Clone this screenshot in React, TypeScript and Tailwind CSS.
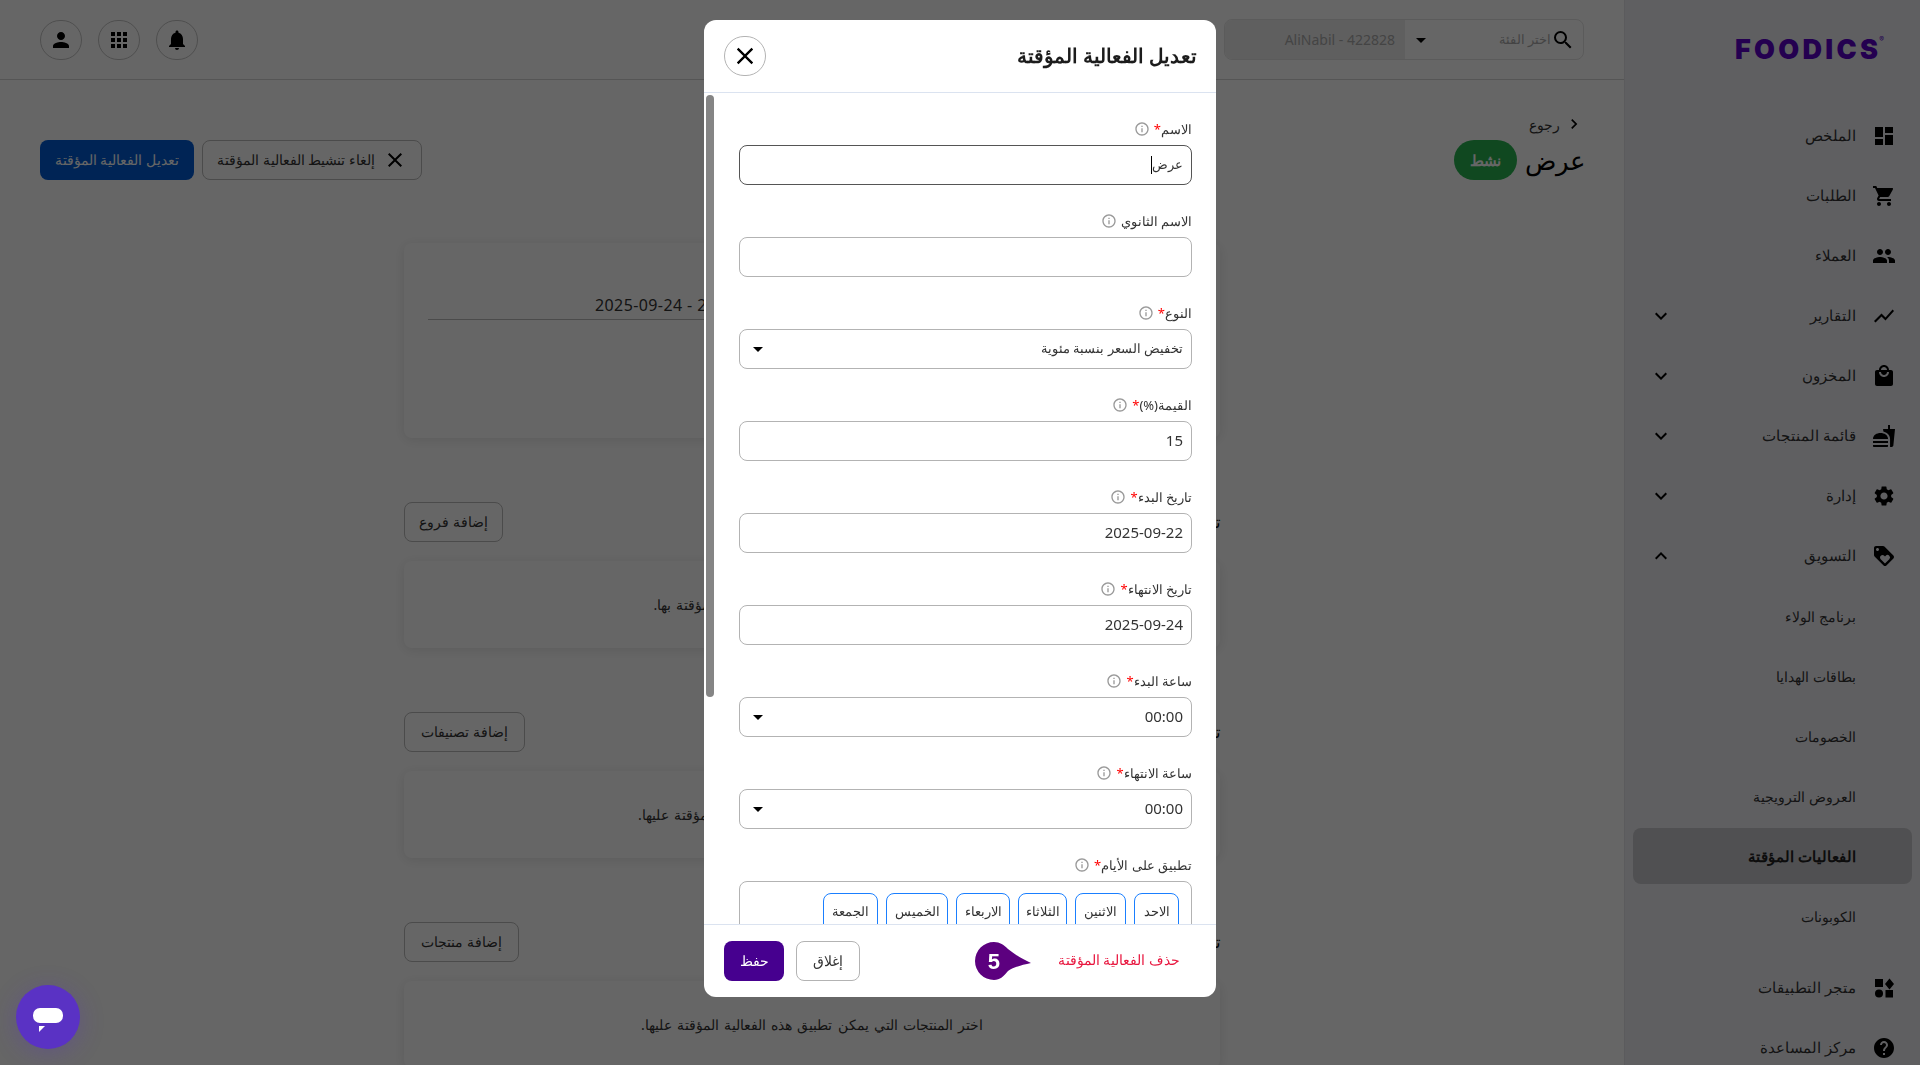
import type { ReactNode } from 'react';
import {
  MdApps,
  MdArrowDropDown,
  MdChevronRight,
  MdClose,
  MdDashboard,
  MdExpandLess,
  MdExpandMore,
  MdFastfood,
  MdHelp,
  MdInfoOutline,
  MdLocalMall,
  MdLoyalty,
  MdNotifications,
  MdPeople,
  MdPerson,
  MdSearch,
  MdSettings,
  MdShoppingCart,
  MdShowChart,
} from 'react-icons/md';

const AppsIcon = () => (
  <svg viewBox="0 0 24 24" className="size-6" fill="currentColor">
    <rect x="3" y="3" width="8" height="8" />
    <path d="M17.5 2.5 22 8l-4.5 5.5L13 8z" />
    <circle cx="7" cy="17.5" r="4" />
    <rect x="13.5" y="14" width="7.5" height="7.5" />
  </svg>
);

const topItems = [
  { label: 'الملخص', icon: <MdDashboard className="size-6" /> },
  { label: 'الطلبات', icon: <MdShoppingCart className="size-6" /> },
  { label: 'العملاء', icon: <MdPeople className="size-6" /> },
  { label: 'التقارير', icon: <MdShowChart className="size-6" />, more: true },
  { label: 'المخزون', icon: <MdLocalMall className="size-6" />, more: true },
  { label: 'قائمة المنتجات', icon: <MdFastfood className="size-6" />, more: true },
  { label: 'إدارة', icon: <MdSettings className="size-6" />, more: true },
];

const subItems = ['برنامج الولاء', 'بطاقات الهدايا', 'الخصومات', 'العروض الترويجية', 'الفعاليات المؤقتة', 'الكوبونات'];

const days = [
  { label: 'الاحد', width: 'w-[45px]' },
  { label: 'الاثنين', width: 'w-[51px]' },
  { label: 'الثلاثاء', width: 'w-[49px]' },
  { label: 'الاربعاء', width: 'w-[54px]' },
  { label: 'الخميس', width: 'w-[62px]' },
  { label: 'الجمعة', width: 'w-[55px]' },
];

const SideItem = ({ label, icon, chevron }: { label: string; icon: ReactNode; chevron?: ReactNode }) => (
  <div className="mx-2 mb-1 flex h-14 items-center gap-4 pr-4 pl-4 text-[#333]">
    <span className="flex w-6 justify-center text-black">{icon}</span>
    <span className="flex-1 text-[14.5px]">{label}</span>
    {chevron}
  </div>
);

const Sidebar = () => (
  <aside className="h-[1065px] w-[296px] shrink-0 overflow-hidden border-l border-[#e4e4e8] bg-[#eeeef3]">
    <div className="flex h-[108px] justify-start pt-[34px] pr-[36px]" dir="ltr">
      <div className="ml-auto flex h-8 items-start font-['Inter',sans-serif] text-[27px] leading-8 font-black tracking-[3.3px] text-[#5a00c8]">
        FOODICS
        <span className="mt-0.5 -ml-0.5 text-[7px] leading-none font-normal tracking-normal">®</span>
      </div>
    </div>
    {topItems.map((item) => (
      <SideItem
        key={item.label}
        label={item.label}
        icon={item.icon}
        chevron={item.more ? <MdExpandMore className="size-6 text-black" /> : undefined}
      />
    ))}
    <SideItem label="التسويق" icon={<MdLoyalty className="size-6" />} chevron={<MdExpandLess className="size-6 text-black" />} />
    <div className="pb-3">
      {subItems.map((label) => (
        <div
          key={label}
          className={
            label === 'الفعاليات المؤقتة'
              ? 'mx-2 mb-1 flex h-14 items-center rounded-lg bg-[#c8c8cc] pr-14 text-[15px] font-bold text-[#222]'
              : 'mx-2 mb-1 flex h-14 items-center pr-14 text-[14px] text-[#333]'
          }
        >
          {label}
        </div>
      ))}
    </div>
    <SideItem label="متجر التطبيقات" icon={<AppsIcon />} />
    <SideItem label="مركز المساعدة" icon={<MdHelp className="size-6" />} />
  </aside>
);

const RoundButton = ({ children }: { children: ReactNode }) => (
  <button className="flex h-10 w-[42px] items-center justify-center rounded-full border border-[#c4c4c4] text-black">{children}</button>
);

const Header = () => (
  <header className="flex h-20 items-center justify-between border-b border-[#d4d4d4] pr-10 pl-10">
    <div className="flex h-[41px] w-[360px] overflow-hidden rounded-lg border border-[#e4e4e4]">
      <div className="flex flex-1 items-center pr-2 pl-1">
        <MdSearch className="size-6 shrink-0 text-black" />
        <span className="flex-1 text-[13px] text-[#aaa]">اختر الفئة</span>
        <MdArrowDropDown className="size-6 text-black" />
      </div>
      <div className="flex w-[180px] items-center justify-start bg-[#eee] pr-2.5 text-[14px] text-[#aaa]" dir="rtl">
        <span dir="ltr">AliNabil - 422828</span>
      </div>
    </div>
    <div className="flex gap-4">
      <RoundButton>
        <MdNotifications className="size-6" />
      </RoundButton>
      <RoundButton>
        <MdApps className="size-6" />
      </RoundButton>
      <RoundButton>
        <MdPerson className="size-6" />
      </RoundButton>
    </div>
  </header>
);

const Section = ({ heading, action, width, text }: { heading: string; action: string; width: string; text: string }) => (
  <section className="mt-16">
    <div className="mb-[19px] flex h-10 items-center justify-between">
      <h3 className="text-[16px] text-black">{heading}</h3>
      <button className={`h-10 rounded-lg border border-[#bbb] text-[13.5px] text-[#333] ${width}`}>{action}</button>
    </div>
    <div className="flex h-[87px] items-center justify-center rounded-lg bg-white text-[14px] [word-spacing:1.5px] text-[#333] shadow-[0_2px_12px_rgba(0,0,0,0.1)]">
      {text}
    </div>
  </section>
);

const Main = () => (
  <main className="h-[1065px] flex-1 overflow-hidden">
    <Header />
    <div className="flex items-end justify-between pt-[34px] pr-10 pl-10">
      <div>
        <div className="flex h-5 items-center gap-1 text-[14px] text-[#333]">
          <MdChevronRight className="size-5 text-black" />
          رجوع
        </div>
        <div className="mt-1.5 -mr-0.5 flex h-10 items-center gap-2">
          <h1 className="text-[25.5px] leading-10 text-black">عرض</h1>
          <span className="flex h-10 w-[63px] items-center justify-center rounded-full bg-[#28b450] text-[15px] font-semibold text-white">نشط</span>
        </div>
      </div>
      <div className="flex gap-2">
        <button className="flex h-10 w-[220px] items-center justify-center gap-2 rounded-lg border border-[#bbb] text-[13.5px] text-[#333]">
          <MdClose className="size-6 text-black" />
          إلغاء تنشيط الفعالية المؤقتة
        </button>
        <button className="h-10 w-[154px] rounded-lg bg-[#005ad4] text-[13.5px] text-white">تعديل الفعالية المؤقتة</button>
      </div>
    </div>
    <div className="mx-auto mt-[63px] w-[816px]">
      <div className="h-[195px] rounded-lg bg-white px-6 pt-[50px] shadow-[0_2px_12px_rgba(0,0,0,0.1)]">
        <div className="flex h-[27px] items-start justify-end border-b border-[#bbb] pl-[167px] text-[16px] tracking-[0.4px] text-[#333]">
          <span dir="ltr">2025-09-24 - 2025-09-22</span>
        </div>
      </div>
      <Section heading="تطبيق على الفروع" action="إضافة فروع" width="w-[99px]" text="اختر الفروع التي يمكن تطبيق هذه الفعالية المؤقتة بها." />
      <Section heading="تطبيق على التصنيفات" action="إضافة تصنيفات" width="w-[121px]" text="اختر التصنيفات التي يمكن تطبيق هذه الفعالية المؤقتة عليها." />
      <Section heading="تطبيق على المنتجات" action="إضافة منتجات" width="w-[115px]" text="اختر المنتجات التي يمكن تطبيق هذه الفعالية المؤقتة عليها." />
    </div>
  </main>
);

const Label = ({ text, required }: { text: string; required?: boolean }) => (
  <div className="mb-1.5 flex h-5 items-center gap-1 text-[13px] leading-5 text-[#333]">
    <span>
      {text}
      {required && <span className="text-[#f00]">*</span>}
    </span>
    <MdInfoOutline className="size-4 text-[#999]" />
  </div>
);

const Field = ({ label, required, children, select }: { label: string; required?: boolean; children?: ReactNode; select?: boolean }) => (
  <div className="mb-[26px]">
    <Label text={label} required={required} />
    <div className="flex h-10 items-center justify-between rounded-lg border border-[#b3b3b3] pr-2 pl-1.5 text-[13px] text-[#333]">
      <span>{children}</span>
      {select && <MdArrowDropDown className="size-6 text-black" />}
    </div>
  </div>
);

const Mono = ({ children }: { children: string }) => (
  <span dir="ltr" className="inline-block pb-0.5 text-[15px]">
    {children}
  </span>
);

const Modal = () => (
  <div className="fixed inset-0 z-10 flex justify-center bg-black/60 pt-5">
    <div className="relative flex h-[977px] w-[512px] flex-col overflow-hidden rounded-xl bg-white">
      <div className="flex h-[73px] shrink-0 items-center justify-between border-b border-[#dbe3f0] pr-[19px] pl-5">
        <h2 className="text-[19.5px] font-bold text-[#1c1c1c]">تعديل الفعالية المؤقتة</h2>
        <button className="flex h-10 w-[42px] items-center justify-center rounded-full border border-[#b3b3b3] text-black">
          <MdClose className="size-7" />
        </button>
      </div>
      <div className="absolute top-[75px] left-0.5 h-[602px] w-2 rounded bg-[#858585]" />
      <div className="flex-1 overflow-hidden pt-[26px] pr-6 pl-[35px]">
        <div className="mb-[26px]">
          <Label text="الاسم" required />
          <div className="flex h-10 items-center rounded-lg border border-[#555] pr-2 text-[13px] text-[#333]">
            عرض
            <span className="h-[18px] w-px bg-black" />
          </div>
        </div>
        <Field label="الاسم الثانوي" />
        <Field label="النوع" required select>
          تخفيض السعر بنسبة مئوية
        </Field>
        <Field label="القيمة(%)" required>
          <Mono>15</Mono>
        </Field>
        <Field label="تاريخ البدء" required>
          <Mono>2025-09-22</Mono>
        </Field>
        <Field label="تاريخ الانتهاء" required>
          <Mono>2025-09-24</Mono>
        </Field>
        <Field label="ساعة البدء" required select>
          <Mono>00:00</Mono>
        </Field>
        <Field label="ساعة الانتهاء" required select>
          <Mono>00:00</Mono>
        </Field>
        <Label text="تطبيق على الأيام" required />
        <div className="flex h-20 gap-2 rounded-lg border border-[#b3b3b3] pt-[11px] pr-3">
          {days.map((day) => (
            <span key={day.label} className={`flex h-10 items-center justify-center rounded-lg border border-[#1a7fff] pb-0.5 text-[12.5px] text-[#333] ${day.width}`}>
              {day.label}
            </span>
          ))}
        </div>
      </div>
      <div className="flex h-[73px] shrink-0 items-center justify-between border-t border-[#dbe3f0] pr-9 pl-5">
        <div className="flex items-center gap-[27px]">
          <span className="pb-0.5 text-[13.6px] text-[#e8173f]">حذف الفعالية المؤقتة</span>
          <span dir="ltr" className="relative flex h-[38px] w-[56px] items-center">
            <svg viewBox="0 0 56 38" className="absolute inset-0 size-full">
              <path d="M19 0c6 0 10 3 14 7 6 5 14 10 23 14-9 2-17 4-23 8-4 5-8 9-14 9A19 19 0 0 1 19 0z" fill="#5c007f" />
            </svg>
            <span className="relative w-[38px] text-center font-['Liberation_Sans',sans-serif] text-[22px] font-bold text-white">5</span>
          </span>
        </div>
        <div className="flex gap-3">
          <button className="h-10 w-16 rounded-lg border border-[#b3b3b3] pb-0.5 text-[14px] text-[#333]">إغلاق</button>
          <button className="h-10 w-[60px] rounded-lg bg-[#46008f] pb-0.5 text-[14px] font-medium text-white">حفظ</button>
        </div>
      </div>
    </div>
  </div>
);

const App = () => (
  <div dir="rtl" className="flex h-[1065px] w-[1920px] overflow-hidden bg-white font-['Noto_Sans',sans-serif]">
    <Sidebar />
    <Main />
    <Modal />
    <button className="fixed bottom-4 left-4 z-20 flex size-16 items-center justify-center rounded-full bg-[#5a32c4] shadow-[0_4px_24px_rgba(90,50,196,0.3)]">
      <svg viewBox="0 0 32 32" className="size-8" fill="#fff">
        <rect x="1" y="7" width="30" height="15" rx="7" />
        <path d="M7 25h6l-6 6z" />
      </svg>
    </button>
  </div>
);

export default App;
